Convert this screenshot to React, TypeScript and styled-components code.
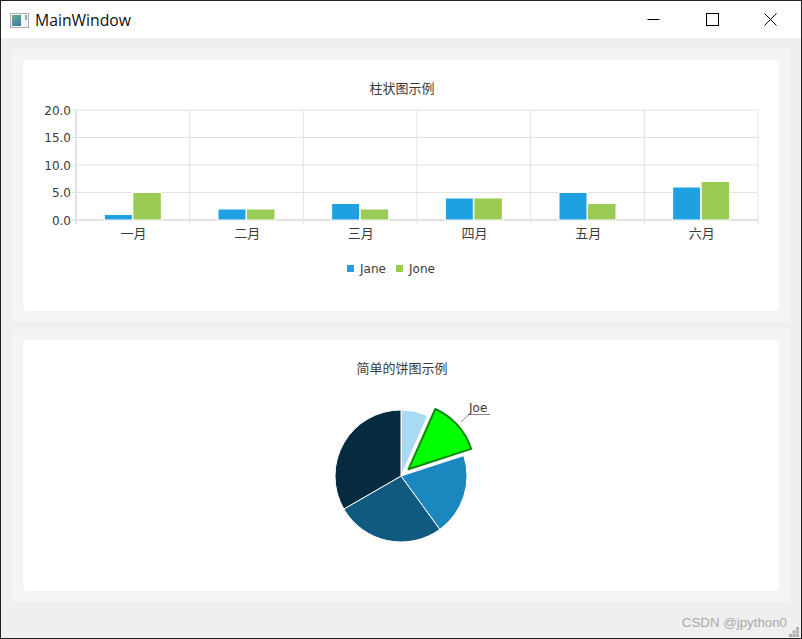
import React from 'react';
import styled, { createGlobalStyle } from 'styled-components';

const UI_FONT = `"Open Sans", "Noto Sans CJK SC", sans-serif`;
const CHART_FONT = `"DejaVu Sans", "Noto Sans CJK SC", sans-serif`;

const GlobalStyle = createGlobalStyle`
  html, body {
    margin: 0;
    padding: 0;
    background: #efefef;
  }
  * {
    box-sizing: border-box;
  }
`;

const Window = styled.div`
  width: 802px;
  height: 639px;
  border: 1px solid #222;
  background: #efefef;
  display: flex;
  flex-direction: column;
  overflow: hidden;
`;

const TitleBar = styled.header`
  height: 37px;
  background: #fff;
  display: flex;
  align-items: center;
  padding: 0 1px 0 9px;
  flex-shrink: 0;
`;

const AppIcon = styled.svg`
  width: 19px;
  height: 15px;
  margin-right: 6px;
  margin-top: 1px;
`;

const WindowTitle = styled.span`
  font: 15.75px ${UI_FONT};
  color: #111;
  flex: 1;
`;

const WinButton = styled.button`
  width: 58.5px;
  height: 37px;
  padding: 0;
  border: none;
  background: none;
  display: flex;
  align-items: center;
  justify-content: center;
  > svg {
    display: block;
    width: 13px;
    height: 13px;
  }
`;

const Content = styled.main`
  display: flex;
  flex-direction: column;
  gap: 7px;
  padding: 11px 11px 0;
`;

const ChartPanel = styled.section`
  height: 273px;
  padding: 11px;
  background: #f4f4f4;
`;

const Card = styled.div`
  height: 251px;
  background: #fff;
  border-radius: 5px;
  display: flex;
  flex-direction: column;
`;

const ChartTitle = styled.div`
  height: 38px;
  padding: 20px 0 0 2px;
  text-align: center;
  font: 13px/18px ${CHART_FONT};
  color: #3a3a3a;
`;

const Plot = styled.svg`
  display: block;
  width: 756px;
  height: 213px;
  text {
    font-family: ${CHART_FONT};
    font-size: 12px;
    fill: #3a3a3a;
  }
  text.cjk {
    font-size: 13px;
  }
`;

const StatusBar = styled.footer`
  flex: 1;
  display: flex;
  align-items: flex-end;
  justify-content: flex-end;
  padding: 0 2px 1px 0;
`;

const Watermark = styled.span`
  font: 13.3px "Liberation Sans", sans-serif;
  color: #a9a9a9;
  margin-right: 2px;
  margin-bottom: 7px;
`;

const Grip = styled.svg`
  width: 10px;
  height: 10px;
`;

const months = ['一月', '二月', '三月', '四月', '五月', '六月'];
const jane = [1, 2, 3, 4, 5, 6];
const jone = [5, 2, 2, 4, 3, 7];
const ticks = [0, 5, 10, 15, 20];

const X0 = 76;
const X1 = 758;
const Y0 = 220;
const UNIT = 5.5;
const CAT = (X1 - X0) / 6;
const BLUE = '#1fa0e0';
const GREEN = '#9acb54';
const GRID = '#e2e2e2';

function BarChart() {
  return (
    <Plot viewBox="23 98 756 213">
      {ticks.map((t) => (
        <g key={t}>
          <line x1={71.5} x2={X1} y1={Y0 - t * UNIT} y2={Y0 - t * UNIT} stroke={GRID} strokeWidth={t === 0 ? 2 : 1} />
          <text x={71} y={Y0 - t * UNIT + 4.5} textAnchor="end">{t.toFixed(1)}</text>
        </g>
      ))}
      {months.map((m, i) => (
        <line key={m} x1={X0 + i * CAT} x2={X0 + i * CAT} y1={110} y2={224} stroke={GRID} strokeWidth={i === 0 ? 2 : 1} />
      ))}
      <line x1={X1} x2={X1} y1={110} y2={224} stroke={GRID} />
      {months.map((m, i) => {
        const mid = X0 + (i + 0.5) * CAT;
        return (
          <g key={m}>
            <rect x={mid - 28.5} y={Y0 - jane[i] * UNIT} width={28} height={jane[i] * UNIT} fill={BLUE} stroke="#fff" strokeWidth={1} />
            <rect x={mid} y={Y0 - jone[i] * UNIT} width={28.5} height={jone[i] * UNIT} fill={GREEN} stroke="#fff" strokeWidth={1} />
            <text className="cjk" x={mid + 0.7} y={238} textAnchor="middle">{m}</text>
          </g>
        );
      })}
      <rect x={347} y={265} width={7} height={7} fill={BLUE} />
      <text x={360} y={273}>Jane</text>
      <rect x={396} y={265} width={7} height={7} fill={GREEN} />
      <text x={409} y={273}>Jone</text>
    </Plot>
  );
}

const CX = 401;
const CY = 476;
const R = 66;

// clockwise from 12 o'clock, the Qt default for a pie series
function wedge(from: number, to: number, dist = 0) {
  const rad = (d: number) => (d * Math.PI) / 180;
  const mid = rad((from + to) / 2);
  const cx = CX + dist * Math.sin(mid);
  const cy = CY - dist * Math.cos(mid);
  const pt = (d: number) => `${cx + R * Math.sin(rad(d))} ${cy - R * Math.cos(rad(d))}`;
  return `M${cx} ${cy} L${pt(from)} A${R} ${R} 0 ${to - from > 180 ? 1 : 0} 1 ${pt(to)} Z`;
}

const slices = [
  { from: 0, to: 24, fill: '#a8dbf3' },
  { from: 72, to: 144, fill: '#1b87bf' },
  { from: 144, to: 240, fill: '#105a7f' },
  { from: 240, to: 360, fill: '#062a3f' },
];

function PieChart() {
  return (
    <Plot viewBox="23 378 756 213">
      {slices.map((s) => (
        <path key={s.from} d={wedge(s.from, s.to)} fill={s.fill} stroke="#fff" strokeWidth={1} />
      ))}
      <path d={wedge(24, 72, 10)} fill="#00ff00" stroke="#0a8a0a" strokeWidth={2} strokeLinejoin="round" />
      <path d="M461 422 L469 414.5 H490" fill="none" stroke="#8a8a8a" strokeWidth={1} />
      <text x={469} y={412}>Joe</text>
    </Plot>
  );
}

export default function App() {
  return (
    <>
      <GlobalStyle />
      <Window>
        <TitleBar>
          <AppIcon viewBox="0 0 19 15">
            <defs>
              <linearGradient id="appFill" x1="0" y1="0" x2="0.6" y2="1">
                <stop offset="0" stopColor="#6fb08f" />
                <stop offset="1" stopColor="#3f7fa5" />
              </linearGradient>
            </defs>
            <rect x="0.5" y="0.5" width="18" height="14" fill="#f2f5f5" stroke="#b0b0b0" />
            <rect x="2" y="2" width="9" height="11" fill="url(#appFill)" />
            <rect x="15" y="2" width="2" height="5" fill="#7fb5ac" />
          </AppIcon>
          <WindowTitle>MainWindow</WindowTitle>
          <WinButton aria-label="minimize">
            <svg viewBox="0 0 13 13"><path d="M0.5 6.5H12.5" stroke="#000" strokeWidth="1" /></svg>
          </WinButton>
          <WinButton aria-label="maximize">
            <svg viewBox="0 0 13 13"><rect x="0.5" y="0.5" width="12" height="12" fill="none" stroke="#000" /></svg>
          </WinButton>
          <WinButton aria-label="close">
            <svg viewBox="0 0 13 13"><path d="M0.5 0.5L12.5 12.5M12.5 0.5L0.5 12.5" stroke="#000" strokeWidth="1" /></svg>
          </WinButton>
        </TitleBar>
        <Content>
          <ChartPanel>
            <Card>
              <ChartTitle>柱状图示例</ChartTitle>
              <BarChart />
            </Card>
          </ChartPanel>
          <ChartPanel>
            <Card>
              <ChartTitle>简单的饼图示例</ChartTitle>
              <PieChart />
            </Card>
          </ChartPanel>
        </Content>
        <StatusBar>
          <Watermark>CSDN @jpython0</Watermark>
          <Grip viewBox="0 0 10 10">
            {[[7, 0], [3.5, 3.5], [7, 3.5], [0, 7], [3.5, 7], [7, 7]].map(([x, y]) => (
              <rect key={`${x}-${y}`} x={x} y={y} width={3} height={3} fill="#b0b0b0" />
            ))}
          </Grip>
        </StatusBar>
      </Window>
    </>
  );
}
